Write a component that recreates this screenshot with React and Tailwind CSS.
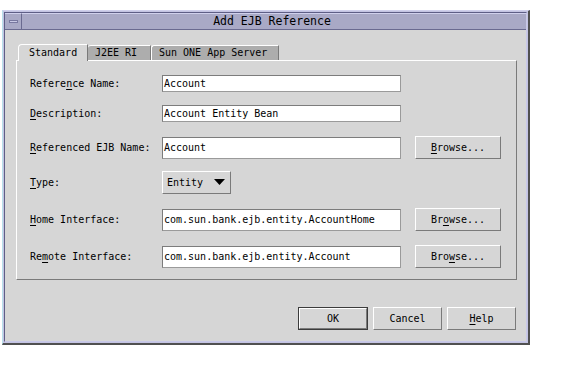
const mono = { fontFamily: '"DejaVu Sans Mono", "Liberation Mono", monospace' };

function Mn({ children }) {
  return <span className="underline underline-offset-2">{children}</span>;
}

function Field({ value, tall }) {
  return (
    <div
      className={`w-[239px] ${tall ? "h-[22px]" : "h-[17px]"} shrink-0 bg-white border border-t-[#7c7c7c] border-l-[#7c7c7c] border-b-[#9a9a9a] border-r-[#9a9a9a] flex items-center pl-[1px] text-[10px] leading-none text-black`}
    >
      {value}
    </div>
  );
}

function Btn({ children, w = "w-[86px]", isDefault }) {
  const inner = (
    <div className="h-full w-full flex items-center justify-center border border-t-white border-l-white border-b-[#7a7a7a] border-r-[#7a7a7a] text-[10px] leading-none text-black bg-[#d6d6d6]">
      {children}
    </div>
  );
  return (
    <div className={`${w} h-[23px] shrink-0 ${isDefault ? "border border-[#3c3c3c]" : ""}`}>{inner}</div>
  );
}

function Row({ label, children, mt }) {
  return (
    <div className={`flex items-center ${mt}`}>
      <div className="w-[132px] shrink-0 text-[10px] leading-none text-black">{label}</div>
      {children}
    </div>
  );
}

export default function App() {
  return (
    <div className="w-[570px] h-[366px] bg-white pt-[10px] pl-[2px]" style={mono}>
      {/* window frame */}
      <div className="w-[528px] h-[335px] flex flex-col bg-[#c4c4e2] border-t border-l border-t-[#d0d0ec] border-l-[#b8e0ea] border-r-2 border-b-2 border-r-[#505050] border-b-[#505050] pl-[1px] pt-[1px] pr-[1px] pb-[1px]">
        <div className="flex-1 flex flex-col border border-l-[#5e5e86] border-t-[#5e5e86] border-r-[#c8c8e8] border-b-[#c8c8e8]">
          {/* title bar */}
          <div className="h-[17px] shrink-0 flex bg-[#a9a9c6] border-b border-b-[#6a6a90]">
            <div className="w-[17px] h-full shrink-0 flex items-center justify-center border-r border-r-[#6a6a90] border-t border-t-[#d0d0ec]">
              <div className="w-[9px] h-[3px] bg-[#c8c8e4] border border-[#7878a0]" />
            </div>
            <div className="flex-1 flex items-center justify-center text-[11.5px] leading-none text-black border-t border-t-[#d0d0ec] pr-[4px]">
              Add EJB Reference
            </div>
          </div>

          {/* content */}
          <div className="flex-1 bg-[#d6d6d6] flex flex-col pl-[11px] pt-[14px] pr-[5px]">
            {/* tabs */}
            <div className="flex items-end h-[16px] pl-[2px] text-[10px] leading-none text-black">
              <div className="w-[70px] h-[17px] -mb-[1px] relative z-10 bg-[#d6d6d6] border-t border-l border-t-white border-l-white border-r border-r-[#7a7a7a] rounded-tl-[4px] flex items-center pl-[10px]">
                Standard
              </div>
              <div className="w-[63px] h-[15px] bg-[#adadad] border-t border-t-white border-r border-r-[#7a7a7a] rounded-tl-[3px] flex items-center pl-[7px]">
                J2EE RI
              </div>
              <div className="w-[128px] h-[15px] bg-[#adadad] border-t border-l border-t-white border-l-white border-r border-r-[#7a7a7a] rounded-tl-[3px] flex items-center pl-[7px]">
                Sun ONE App Server
              </div>
            </div>

            {/* tab panel */}
            <div className="w-[501px] h-[220px] border border-t-white border-l-white border-r-[#7a7a7a] border-b-[#7a7a7a] flex flex-col pl-[13px] pt-[14px]">
              <Row label={<>Refere<Mn>n</Mn>ce Name:</>} mt="">
                <Field value="Account" />
              </Row>
              <Row label={<><Mn>D</Mn>escription:</>} mt="mt-[13px]">
                <Field value="Account Entity Bean" />
              </Row>
              <Row label={<><Mn>R</Mn>eferenced EJB Name:</>} mt="mt-[14px]">
                <Field value="Account" tall />
                <div className="ml-[14px]">
                  <Btn><Mn>B</Mn>rowse...</Btn>
                </div>
              </Row>
              <Row label={<><Mn>T</Mn>ype:</>} mt="mt-[12px]">
                <div className="w-[69px] h-[23px] border border-t-white border-l-white border-b-[#7a7a7a] border-r-[#7a7a7a] flex items-center pl-[4px] text-[10px] leading-none text-black">
                  <span>Entity</span>
                  <svg width="11" height="7" viewBox="0 0 11 7" className="ml-[11px]">
                    <polygon points="0,0 11,0 5.5,6" fill="#000" />
                  </svg>
                </div>
              </Row>
              <Row label={<><Mn>H</Mn>ome Interface:</>} mt="mt-[14px]">
                <Field value="com.sun.bank.ejb.entity.AccountHome" tall />
                <div className="ml-[14px]">
                  <Btn>Br<Mn>o</Mn>wse...</Btn>
                </div>
              </Row>
              <Row label={<>Re<Mn>m</Mn>ote Interface:</>} mt="mt-[14px]">
                <Field value="com.sun.bank.ejb.entity.Account" tall />
                <div className="ml-[14px]">
                  <Btn>Bro<Mn>w</Mn>se...</Btn>
                </div>
              </Row>
            </div>

            {/* bottom buttons */}
            <div className="flex justify-end gap-[5px] mt-[27px] w-[501px] pr-[1px]">
              <Btn w="w-[70px]" isDefault>OK</Btn>
              <Btn w="w-[69px]">Cancel</Btn>
              <Btn w="w-[69px]"><Mn>H</Mn>elp</Btn>
            </div>
          </div>
        </div>
      </div>
    </div>
  );
}
